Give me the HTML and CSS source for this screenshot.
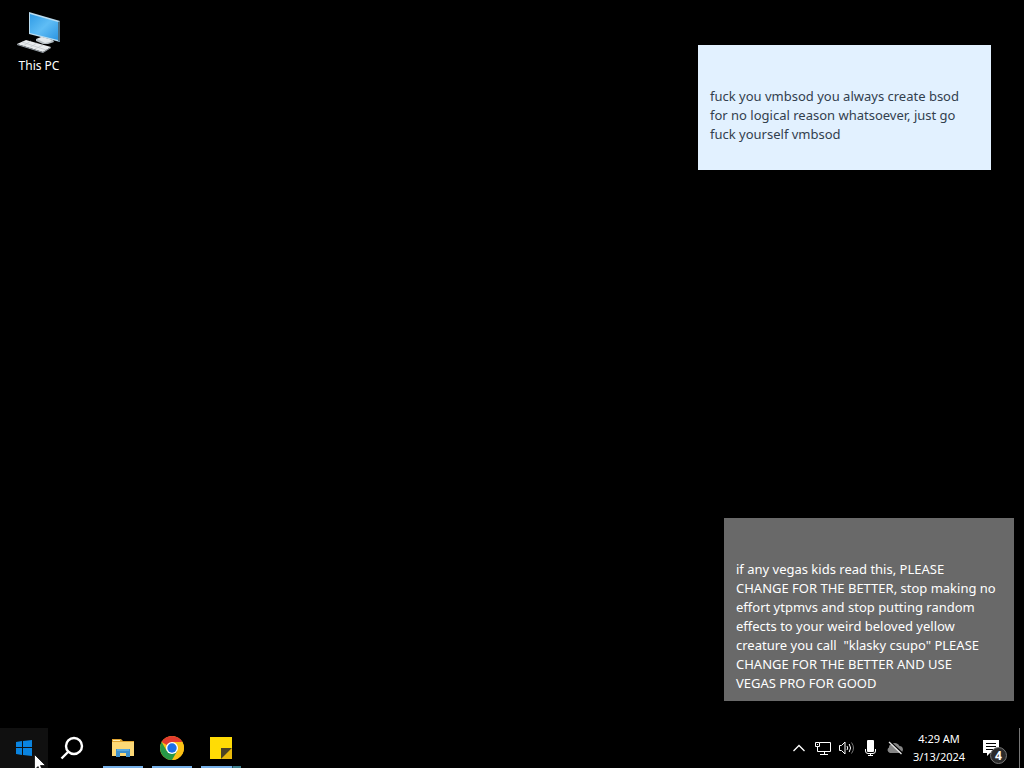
FILE: index.html
```
<!DOCTYPE html>
<html lang="en">
<head>
    <meta charset="UTF-8">
    <meta name="viewport" content="width=device-width, initial-scale=1.0">
    <title>Desktop</title>
    <link rel="stylesheet" href="styles.css">
</head>
<body>
    <main class="desktop">
        <a class="shortcut" href="#">
            <svg width="44" height="44" viewBox="0 0 44 44" aria-hidden="true">
                <defs>
                    <linearGradient id="screen" x1="0" y1="0" x2="1" y2="1">
                        <stop offset="0" stop-color="#2f9be6"/>
                        <stop offset="0.5" stop-color="#5fbdf5"/>
                        <stop offset="1" stop-color="#2c95e2"/>
                    </linearGradient>
                </defs>
                <path d="M12 2 L43 11 L43 32 L12 24 Z" fill="#b9dcf0"/>
                <path d="M13 4 L41 12 L41 30 L13 23 Z" fill="url(#screen)"/>
                <path d="M43 11 L43 32 L41 31 L41 12 Z" fill="#4b6f84"/>
                <path d="M19 29 L24 27 L36 30 L37 32 L31 34 L26 34 L19 31 Z" fill="#b4bcc1"/>
                <path d="M20 29 L25 27 L35 30 L33 32 L28 33 Z" fill="#e4e9ec"/>
                <path d="M0 34 L9 30 L34 37 L26 42 Z" fill="#e9ecee"/>
                <path d="M0 34 L26 42 L34 37 L34 38 L26 43 L0 35 Z" fill="#98a1a8"/>
                <path d="M5 32 L29 40 M6 36 L14 31 M12 38 L20 33 M18 39 L26 35" stroke="#c0c6ca" stroke-width="0.7" fill="none"/>
            </svg>
            <span>This PC</span>
        </a>

        <article class="note note-blue">
            <p>fuck you vmbsod you always create bsod<br>
            for no logical reason whatsoever, just go<br>
            fuck yourself vmbsod</p>
        </article>

        <article class="note note-gray">
            <p>if any vegas kids read this, PLEASE<br>
            CHANGE FOR THE BETTER, stop making no<br>
            effort ytpmvs and stop putting random<br>
            effects to your weird beloved yellow<br>
            creature you call&nbsp; "klasky csupo" PLEASE<br>
            CHANGE FOR THE BETTER AND USE<br>
            VEGAS PRO FOR GOOD</p>
        </article>
    </main>

    <footer class="taskbar">
        <div class="system">
            <button class="task start" aria-label="Start">
                <svg width="16" height="16" viewBox="0 0 16 16">
                    <path d="M0 2 L6 1 V7 H0 Z M7 1 L16 0 V7 H7 Z M0 8 H6 V15 L0 14 Z M7 8 H16 V16 L7 15 Z" fill="#0a84e0"/>
                </svg>
            </button>
            <button class="task" aria-label="Search">
                <svg width="24" height="24" viewBox="0 0 24 24" fill="none" stroke="#fff" stroke-width="2.400">
                    <circle cx="14" cy="10" r="8"/>
                    <path d="M8.500 15.500 L1.500 22.500"/>
                </svg>
            </button>
        </div>

        <nav class="apps">
            <button class="task open" aria-label="File Explorer">
                <svg width="22" height="22" viewBox="0 0 22 22">
                    <path d="M0 2 H9 L11 4 H22 V8 H0 Z" fill="#dfa431"/>
                    <path d="M0 5 H22 V19 H0 Z" fill="#fcd876"/>
                    <path d="M1 3 H8 V4 H1 Z" fill="#fff0b8"/>
                    <path d="M4 12 H18 V20 H14 V16 H8 V20 H4 Z" fill="#3d8fcb"/>
                    <path d="M5 12 H17 V14 H5 Z" fill="#58a9df"/>
                </svg>
            </button>
            <button class="task open" aria-label="Google Chrome">
                <svg width="24" height="24" viewBox="0 0 24 24">
                    <circle cx="12" cy="12" r="12" fill="#fbc116"/>
                    <path d="M12 12 L1.610 6 A12 12 0 0 1 22.390 6 Z" fill="#e33b2e"/>
                    <path d="M12 6 H22.390 A12 12 0 0 1 12 24 L17.200 15 Z" fill="#fbc116"/>
                    <path d="M1.610 6 A12 12 0 0 0 12 24 L17.200 15 L12 12 L6.800 15 Z" fill="#279847"/>
                    <circle cx="12" cy="12" r="6" fill="#fff"/>
                    <circle cx="12" cy="12" r="4.700" fill="#1a6fe8"/>
                </svg>
            </button>
            <button class="task open stacked" aria-label="Sticky Notes">
                <svg width="22" height="22" viewBox="0 0 22 22">
                    <path d="M0 0 H22 V11 L11 22 H0 Z" fill="#ffdc05"/>
                    <path d="M11 11 H22 L11 22 Z" fill="#4b4325"/>
                    <path d="M22 11 V22 H11 Z" fill="#e9b90b"/>
                </svg>
            </button>
        </nav>

        <div class="tray">
            <button class="tray-icon" aria-label="Show hidden icons">
                <svg width="12" height="8" viewBox="0 0 12 8" fill="none" stroke="#fff" stroke-width="1.300">
                    <path d="M0.500 7 L6 1.500 L11.500 7"/>
                </svg>
            </button>
            <button class="tray-icon" aria-label="Network">
                <svg width="16" height="14" viewBox="0 0 16 14" fill="none" stroke="#fff">
                    <path d="M4.500 1.500 H15.500 V10.500 H2.500 V5.500 M9.500 10.500 V13 M5 13.500 H13"/>
                    <path d="M0.500 1.500 H4.500 V5.500 H0.500 Z"/>
                    <path d="M2 3.500 H3"/>
                </svg>
            </button>
            <button class="tray-icon" aria-label="Volume">
                <svg width="16" height="16" viewBox="0 0 16 16" fill="none" stroke="#fff">
                    <path d="M0.500 5.500 H2.500 L6 2 V14 L2.500 10.500 H0.500 Z"/>
                    <path d="M8 6 Q9.500 8 8 10 M10.200 4 Q13 8 10.200 12"/>
                    <path d="M12.500 2.500 Q16.500 8 12.500 13.500" stroke="#777"/>
                </svg>
            </button>
            <button class="tray-icon" aria-label="Microphone">
                <svg width="12" height="16" viewBox="0 0 12 16" fill="none" stroke="#fff">
                    <rect x="2" y="0" width="7" height="12" rx="1" fill="#fff" stroke="none"/>
                    <path d="M0.500 9 V11 Q0.500 13.500 3 13.500 H8 Q10.500 13.500 10.500 11 V9 M5.500 13 V15 M3 15.500 H8"/>
                </svg>
            </button>
            <button class="tray-icon" aria-label="OneDrive">
                <svg width="16" height="14" viewBox="0 0 16 14">
                    <path d="M3 12 A3 3 0 0 1 2 6.500 A3.500 3.500 0 0 1 5 3 A5 5 0 0 1 12.500 5 A3.600 3.600 0 0 1 13.500 12 Z" fill="#858585"/>
                    <path d="M3.500 1 L16 12.500" stroke="#000" stroke-width="1.400"/>
                    <path d="M2 1 L14.500 13" stroke="#e6e6e6" stroke-width="1.300"/>
                </svg>
            </button>
            <button class="clock">
                <time datetime="2024-03-13T04:29">4:29 AM<br>3/13/2024</time>
            </button>
            <button class="action-center" aria-label="Notifications">
                <svg width="16" height="16" viewBox="0 0 16 16">
                    <path d="M0 0 H16 V13 H7 L4 16 V13 H0 Z" fill="#fff"/>
                    <path d="M3 3.500 H13 M3 6.500 H13 M3 9.500 H10" stroke="#000"/>
                </svg>
                <span class="badge">4</span>
            </button>
            <button class="show-desktop" aria-label="Show desktop"></button>
        </div>
    </footer>

    <svg class="cursor" width="12" height="19" viewBox="0 0 12 19" aria-hidden="true">
        <path d="M0.500 0.500 V16 L4 12.500 L6.500 18.500 L9 17.500 L6.500 11.500 H11.500 Z" fill="#fff" stroke="#000" stroke-width="0.700"/>
    </svg>
</body>
</html>
```
FILE: styles.css
```
body {
    margin: 0;
    min-height: 100vh;
    display: flex;
    flex-direction: column;
    overflow: hidden;
    background: #000;
    color: #fff;
    font-family: 'Noto Sans', 'Open Sans', sans-serif;
}

button {
    padding: 0;
    border: none;
    background: none;
    color: inherit;
    font-family: inherit;
}

button:hover {
    background-color: #222;
}

svg {
    display: block;
    flex-shrink: 0;
}

/* Desktop */
.desktop {
    position: relative;
    flex: 1;
}

.shortcut {
    display: flex;
    flex-direction: column;
    align-items: center;
    gap: 4px;
    width: 78px;
    padding-top: 10px;
    color: #fff;
    font-size: 12px;
    line-height: 16px;
    text-decoration: none;
}

.note {
    position: absolute;
    box-sizing: border-box;
    padding: 42px 12px 26px;
    font-size: 13px;
    line-height: 19px;
    white-space: nowrap;
}

.note p {
    margin: 0;
}

.note-blue {
    top: 45px;
    right: 33px;
    width: 293px;
    background: #e2f1ff;
    color: #32404e;
}

.note-gray {
    right: 10px;
    bottom: 27px;
    width: 290px;
    padding-bottom: 8px;
    background: #696969;
}

/* Taskbar */
.taskbar {
    display: flex;
    justify-content: space-between;
    height: 40px;
}

.system,
.apps,
.tray {
    display: flex;
}

.apps {
    gap: 1px;
    margin-left: 3px;
    margin-right: auto;
}

.task {
    position: relative;
    display: flex;
    align-items: center;
    justify-content: center;
    width: 48px;
}

.start {
    background: #101010;
}

.open::after {
    content: '';
    position: absolute;
    left: 4px;
    right: 4px;
    bottom: 0;
    height: 2px;
    background: #76b0e8;
}

.stacked::after {
    background: linear-gradient(to right, #76b0e8 31px, #234a5c 31px, #234a5c 32px, #3f808f 32px);
}

.tray-icon {
    display: flex;
    align-items: center;
    justify-content: center;
    width: 24px;
}

.clock {
    width: 64px;
    font-size: 11px;
    line-height: 18px;
    white-space: nowrap;
}

.action-center {
    position: relative;
    display: flex;
    align-items: center;
    justify-content: center;
    width: 40px;
}

.badge {
    position: absolute;
    left: 19px;
    top: 19px;
    box-sizing: border-box;
    width: 17px;
    height: 17px;
    border: 1px solid #777;
    border-radius: 50%;
    background: #2b2b2b;
    font-size: 12px;
    font-weight: bold;
    line-height: 15px;
    text-align: center;
}

.show-desktop {
    width: 5px;
    margin-left: 8px;
    border-left: 1px solid #777;
}

.cursor {
    position: absolute;
    left: 34px;
    bottom: -5px;
}
```
